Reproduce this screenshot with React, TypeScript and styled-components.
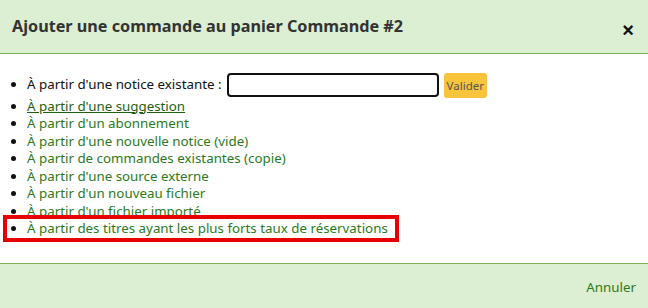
import styled, { createGlobalStyle } from "styled-components";

const headerBg = "#dcefd3";
const borderGreen = "#79b35a";
const linkGreen = "#2b7a22";

const GlobalStyle = createGlobalStyle`
  html, body {
    margin: 0;
    padding: 0;
    background: #ffffff;
  }
  body {
    font-family: "Noto Sans", "Open Sans", "Liberation Sans", sans-serif;
    color: #222;
  }
`;

const Modal = styled.div`
  width: 648px;
  height: 308px;
  display: flex;
  flex-direction: column;
  background: #fff;
`;

const Header = styled.div`
  height: 53px;
  display: flex;
  align-items: center;
  justify-content: space-between;
  padding: 0 14px 0 12px;
  background: ${headerBg};
  border-bottom: 1px solid ${borderGreen};
`;

const Title = styled.h1`
  margin: 0;
  font-size: 16.2px;
  font-weight: 700;
  color: #333;
  padding-bottom: 2px;
`;

const Close = styled.button`
  border: 0;
  background: none;
  padding: 0;
  margin-top: 6px;
  font-size: 20px;
  font-weight: 700;
  line-height: 1;
  color: #111;
  cursor: pointer;
`;

const Body = styled.div`
  flex: 1;
  position: relative;
  padding: 18px 0 0 0;
`;

const List = styled.ul`
  margin: 0;
  padding-left: 27px;
  list-style: disc;
  font-size: 13.33px;
  line-height: 17.5px;
`;

const Item = styled.li`
  color: #111;
`;

const FirstItem = styled(Item)`
  height: 25.5px;
  & > span {
    display: inline-flex;
    align-items: center;
    gap: 5px;
  }
`;

const Notice = styled.input`
  width: 206px;
  height: 20px;
  box-sizing: content-box;
  padding: 0 1px;
  border: 2px solid #111;
  border-radius: 4px;
  margin-left: 0;
  outline: none;
`;

const Valider = styled.button`
  height: 25px;
  margin-top: 1px;
  padding: 0 3px;
  border: 0;
  border-radius: 3px;
  background: #f8c43c;
  color: #555;
  font-family: inherit;
  font-size: 11.5px;
`;

const Link = styled.a<{ $underline?: boolean }>`
  color: ${(p) => (p.$underline ? "#1f5f15" : linkGreen)};
  text-decoration: ${(p) => (p.$underline ? "underline" : "none")};
  cursor: pointer;
`;

const Highlight = styled.div`
  position: absolute;
  left: 3px;
  top: 161px;
  width: 388px;
  height: 19px;
  border: 4px solid #e60000;
  pointer-events: none;
`;

const Footer = styled.div`
  height: 44px;
  display: flex;
  align-items: center;
  justify-content: flex-end;
  padding: 0 12px 0 0;
  background: ${headerBg};
  border-top: 1px solid ${borderGreen};
`;

const Cancel = styled.a`
  color: ${linkGreen};
  font-size: 13.33px;
  cursor: pointer;
  padding-top: 2px;
`;

const links = [
  "À partir d'un abonnement",
  "À partir d'une nouvelle notice (vide)",
  "À partir de commandes existantes (copie)",
  "À partir d'une source externe",
  "À partir d'un nouveau fichier",
  "À partir d'un fichier importé",
  "À partir des titres ayant les plus forts taux de réservations",
];

export default function App() {
  return (
    <>
      <GlobalStyle />
      <Modal>
        <Header>
          <Title>Ajouter une commande au panier Commande #2</Title>
          <Close aria-label="Fermer">×</Close>
        </Header>
        <Body>
          <List>
            <FirstItem>
              <span>
                À partir d'une notice existante :
                <Notice type="text" />
                <Valider>Valider</Valider>
              </span>
            </FirstItem>
            <Item>
              <Link $underline>À partir d'une suggestion</Link>
            </Item>
            {links.map((l) => (
              <Item key={l}>
                <Link>{l}</Link>
              </Item>
            ))}
          </List>
          <Highlight />
        </Body>
        <Footer>
          <Cancel>Annuler</Cancel>
        </Footer>
      </Modal>
    </>
  );
}
